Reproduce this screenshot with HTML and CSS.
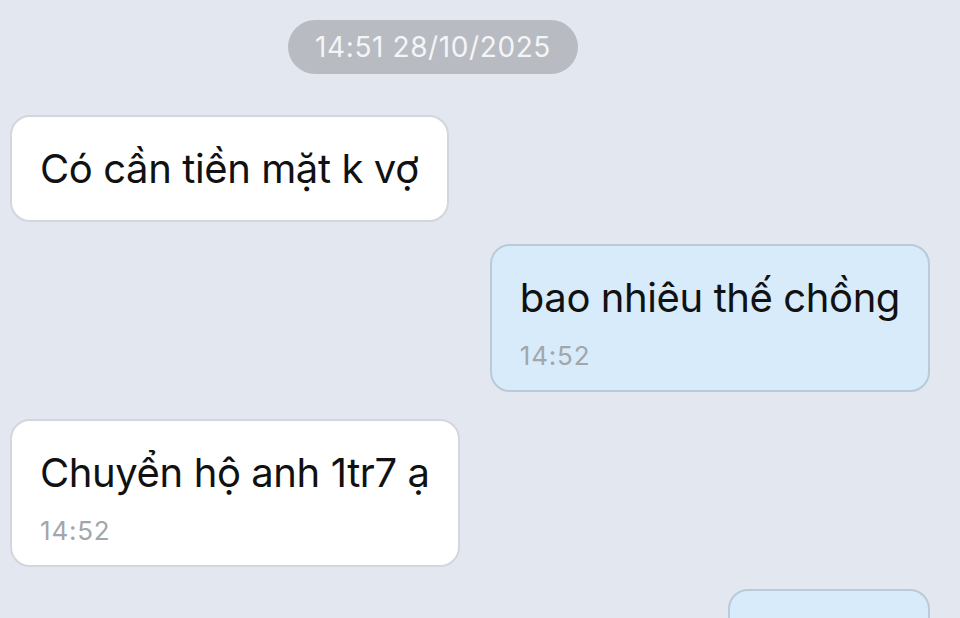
FILE: index.html
```html
<!DOCTYPE html>
<html lang="vi">
<head>
<meta charset="utf-8">
<link rel="stylesheet" href="styles.css">
</head>
<body>
<div class="chat">
  <div class="stamp">14:51 28/10/2025</div>
  <div class="msg in first">
    <div class="text">Có cần tiền mặt k vợ</div>
  </div>
  <div class="msg out">
    <div class="text">bao nhiêu thế chồng</div>
    <div class="time">14:52</div>
  </div>
  <div class="msg in">
    <div class="text">Chuyển hộ anh 1tr7 ạ</div>
    <div class="time">14:52</div>
  </div>
  <div class="msg out last">
    <div class="text">&nbsp;</div>
  </div>
</div>
</body>
</html>
```
FILE: styles.css
```css
html, body {
  margin: 0;
  padding: 0;
  background: #e3e7ef;
  overflow: hidden;
  height: 618px;
}
.chat {
  display: flex;
  flex-direction: column;
  padding: 20px 30px 0 10px;
  font-family: Inter, "Noto Sans", sans-serif;
}
.stamp {
  align-self: flex-start;
  margin-left: 278px;
  width: 290px;
  height: 54px;
  box-sizing: border-box;
  border-radius: 27px;
  background: #b8bbc1;
  color: #f4f5f7;
  font-size: 28px;
  letter-spacing: 0.6px;
  display: flex;
  align-items: center;
  justify-content: center;
}
.msg {
  box-sizing: border-box;
  border-radius: 20px;
  border: 2px solid #d3d6dc;
  background: #ffffff;
  padding: 0 28px;
  display: flex;
  flex-direction: column;
}
.msg.in { align-self: flex-start; }
.msg.out {
  align-self: flex-end;
  background: #d7ebfa;
  border-color: #b9cad8;
}
.msg.first {
  margin-top: 41px;
  height: 107px;
  justify-content: center;
}
.msg.out { margin-top: 22px; height: 148px; padding-top: 28px; }
.msg.in + .msg.out { margin-top: 22px; }
.msg.out + .msg.in { margin-top: 27px; height: 148px; padding-top: 28px; }
.msg.last { width: 202px; height: 80px; }
.text {
  font-size: 40px;
  line-height: 48px;
  letter-spacing: -0.4px;
  color: #111111;
  white-space: nowrap;
}
.time {
  font-size: 26px;
  line-height: 30px;
  letter-spacing: 0.8px;
  margin-top: 19px;
  color: #a2a6ab;
}
```
